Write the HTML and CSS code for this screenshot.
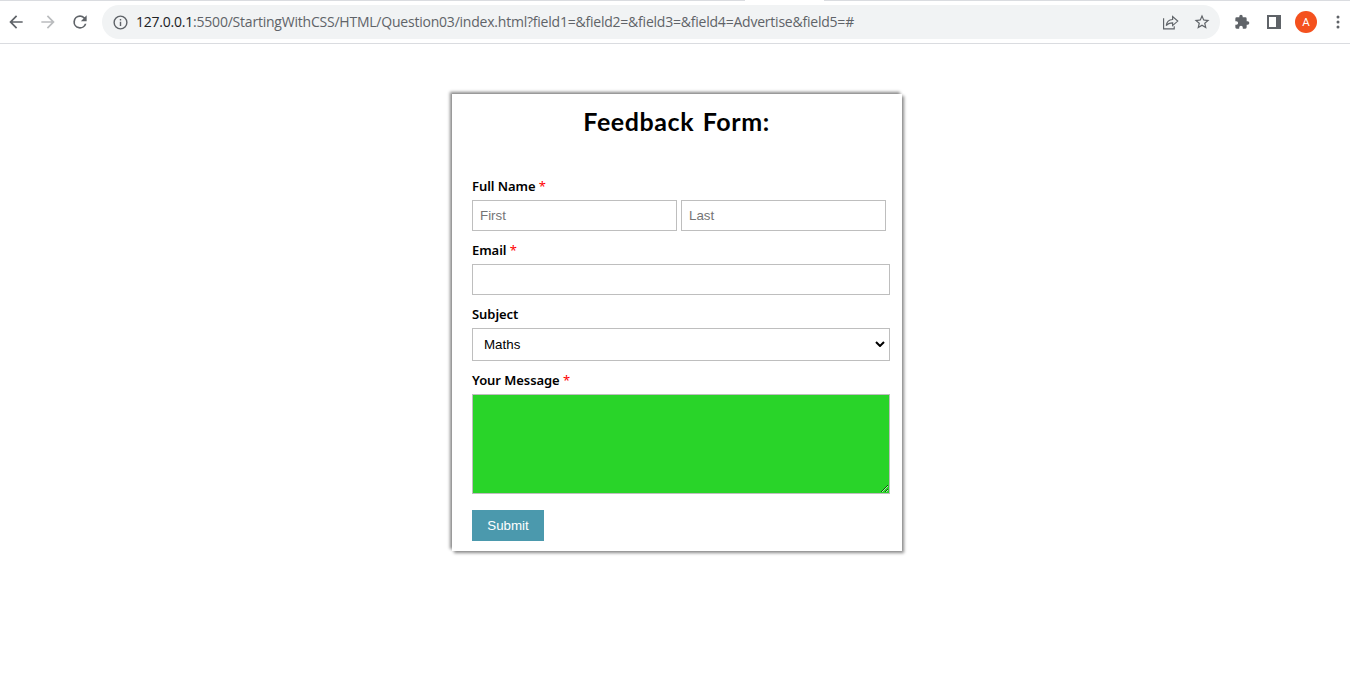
FILE: index.html
```html
<!DOCTYPE html>
<html lang="en">
<head>
<meta charset="utf-8">
<title>Feedback Form</title>
<link rel="stylesheet" href="styles.css">
</head>
<body>
<header class="toolbar">
  <div class="tab-gap"></div>
  <nav class="nav">
    <svg class="icon" viewBox="0 0 24 24"><path d="M20 11H7.83l5.59-5.59L12 4l-8 8 8 8 1.41-1.41L7.83 13H20v-2z"/></svg>
    <svg class="icon faded" viewBox="0 0 24 24"><path d="M12 4l-1.41 1.41L16.17 11H4v2h12.17l-5.58 5.59L12 20l8-8z"/></svg>
    <svg class="icon" viewBox="0 0 24 24"><path d="M17.65 6.35A7.96 7.96 0 0 0 12 4a8 8 0 1 0 7.73 10h-2.08A6 6 0 1 1 12 6c1.66 0 3.14.69 4.22 1.78L13 11h7V4l-2.35 2.35z"/></svg>
  </nav>
  <div class="address">
    <svg class="info" viewBox="0 0 24 24"><path d="M11 7h2v2h-2zm0 4h2v6h-2zm1-9a10 10 0 1 0 0 20 10 10 0 0 0 0-20zm0 18a8 8 0 1 1 0-16 8 8 0 0 1 0 16z"/></svg>
    <div class="url"><span class="host">127.0.0.1</span>:5500/StartingWithCSS/HTML/Question03/index.html?field1=&amp;field2=&amp;field3=&amp;field4=Advertise&amp;field5=#</div>
    <svg class="share" viewBox="0 0 16 16"><path d="M1.500 4v10h10v-2.500M4 11c.5-4 2.500-5.600 6-5.800V2.500l4.800 4.200-4.800 4.200V8.300c-2.700 0-4.500.5-6 2.700z"/></svg>
    <svg class="star" viewBox="0 0 24 24"><path d="M22 9.240l-7.190-.62L12 2 9.190 8.630 2 9.240l5.460 4.730L5.820 21 12 17.270 18.180 21l-1.630-7.030L22 9.240zM12 15.400l-3.760 2.270 1-4.280-3.320-2.880 4.380-.38L12 6.100l1.710 4.040 4.380.38-3.320 2.880 1 4.280L12 15.400z"/></svg>
  </div>
  <div class="tools">
    <svg class="puzzle" viewBox="0 0 24 24"><path d="M20.500 11H19V7a2 2 0 0 0-2-2h-4V3.500a2.500 2.500 0 0 0-5 0V5H4a2 2 0 0 0-2 2v3.800h1.500a2.700 2.700 0 0 1 0 5.400H2V20a2 2 0 0 0 2 2h3.800v-1.500a2.700 2.700 0 0 1 5.400 0V22H17a2 2 0 0 0 2-2v-4h1.500a2.500 2.500 0 0 0 0-5z"/></svg>
    <svg class="panel" viewBox="0 0 14 14"><path fill-rule="evenodd" d="M0 0h14v14H0zM2 2v10h7V2z"/></svg>
    <span class="avatar">A</span>
    <svg class="dots" viewBox="0 0 4 14"><circle cx="2" cy="2" r="1.500"/><circle cx="2" cy="7" r="1.500"/><circle cx="2" cy="12" r="1.500"/></svg>
  </div>
</header>
<main class="card">
  <h1 class="title">Feedback Form:</h1>
  <form class="form">
    <div class="group">
      <label class="label">Full Name <span class="required">*</span></label>
      <div class="names"><input class="field" placeholder="First"><input class="field" placeholder="Last"></div>
    </div>
    <div class="group">
      <label class="label">Email <span class="required">*</span></label>
      <input class="field">
    </div>
    <div class="group">
      <label class="label">Subject</label>
      <div class="field select"><span class="choice">Maths</span><svg class="chevron" viewBox="0 0 10 6"><path d="M1 1l4 4 4-4"/></svg></div>
    </div>
    <div class="group">
      <label class="label">Your Message <span class="required">*</span></label>
      <textarea class="field message"></textarea>
    </div>
    <button class="submit" type="button">Submit</button>
  </form>
</main>
</body>
</html>
```
FILE: styles.css
```css
* { box-sizing: border-box; }
body { margin: 0; height: 685px; overflow: hidden; background: #fff; font-family: "Liberation Sans", sans-serif; }
svg { display: block; flex: none; fill: #5f6368; }
.toolbar { position: relative; display: flex; align-items: center; height: 44px; border-top: 1px solid #dadce0; border-bottom: 1px solid #dadce0; }
.tab-gap { position: absolute; top: -1px; left: 745px; width: 79px; height: 1px; background: #fff; }
.nav { display: flex; gap: 12px; width: 102px; padding-left: 6px; }
.icon { width: 20px; height: 20px; }
.faded { fill: #babcbe; }
.address { display: flex; align-items: center; width: 1118px; height: 34px; padding: 0 9px 0 10px; border-radius: 17px; background: #f1f3f4; }
.info { width: 17px; height: 17px; }
.url { flex: 1; margin-left: 7px; white-space: nowrap; font: 14px/20px "Open Sans", sans-serif; letter-spacing: -0.22px; color: #5f6368; }
.host { color: #202124; }
.share { width: 17px; height: 17px; fill: none; stroke: #5f6368; stroke-width: 1.1; margin-right: 14px; }
.star { width: 18px; height: 18px; }
.tools { display: flex; align-items: center; margin-left: 14px; }
.puzzle { width: 16px; height: 16px; }
.panel { width: 14px; height: 14px; margin-left: 17px; }
.avatar { width: 22px; height: 22px; margin-left: 14px; border-radius: 50%; background: #f4511e; color: #fff; font: 11.500px/22px Roboto, sans-serif; text-align: center; }
.dots { width: 4px; height: 14px; margin-left: 19px; }
.card { width: 450px; height: 457px; margin: 50px 0 0 452px; padding: 10px 12px 10px 20px; background: #fff; box-shadow: 2px 2px 3px #888, -2px -2px 3px #888; }
.title { margin: 0 9px 0 0; height: 72px; text-align: center; font: 700 25px/34px Lato, sans-serif; letter-spacing: 0.57px; word-spacing: 2px; white-space: nowrap; color: #000; }
.form { display: flex; flex-direction: column; align-items: flex-start; }
.group { width: 418px; margin-bottom: 9px; }
.label { display: block; height: 24px; font: 600 13px/21px "Noto Sans", sans-serif; letter-spacing: -0.06px; color: #000; white-space: nowrap; }
.required { color: #f00; font-weight: 400; }
.names { display: flex; gap: 4px; width: 414px; }
.field { display: block; width: 100%; height: 31px; margin: 0; padding: 0 7px; border: 1px solid #bebebe; border-radius: 0; outline: none; background: #fff; font: 13.333px "Liberation Sans", sans-serif; color: #000; }
.field::placeholder { color: #757575; }
.select { display: flex; align-items: center; justify-content: space-between; height: 33px; padding: 0 4px 1px 11px; }
.chevron { width: 10px; height: 6px; fill: none; stroke: #000; stroke-width: 2; }
.message { height: 100px; background: #29d429; resize: vertical; }
.submit { width: 72px; height: 31px; margin-top: 7px; padding: 0; border: 0; background: #4b99ad; color: #fff; font: 13.333px "Liberation Sans", sans-serif; }
```
